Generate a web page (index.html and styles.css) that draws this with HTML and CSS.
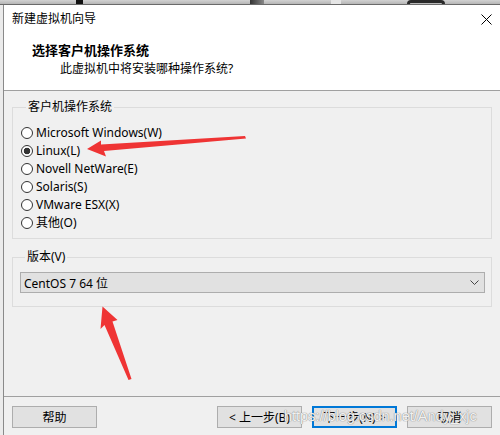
FILE: index.html
```html
<!DOCTYPE html>
<html lang="zh-CN">
<head>
<meta charset="utf-8">
<title>新建虚拟机向导</title>
<link rel="stylesheet" href="styles.css">
</head>
<body>
<div class="desk">
  <span class="d1"></span><span class="d2"></span><span class="d3"></span><span class="d4"></span>
</div>
<div class="win">
  <div class="header">
    <div class="titlerow">
      <span class="title">新建虚拟机向导</span>
      <svg class="close" width="11" height="11" viewBox="0 0 11 11"><path d="M0.5 0.5L10.5 10.5M10.5 0.5L0.5 10.5" stroke="#000" stroke-width="1" fill="none"/></svg>
    </div>
    <div class="heading">选择客户机操作系统</div>
    <div class="sub">此虚拟机中将安装哪种操作系统?</div>
  </div>
  <div class="content">
    <fieldset class="group os">
      <legend>客户机操作系统</legend>
      <div class="radio"><span class="circle"></span>Microsoft Windows(W)</div>
      <div class="radio"><span class="circle checked"></span>Linux(L)</div>
      <div class="radio"><span class="circle"></span>Novell NetWare(E)</div>
      <div class="radio"><span class="circle"></span>Solaris(S)</div>
      <div class="radio"><span class="circle"></span>VMware ESX(X)</div>
      <div class="radio"><span class="circle"></span>其他(O)</div>
    </fieldset>
    <fieldset class="group ver">
      <legend>版本(V)</legend>
      <div class="select">
        <span>CentOS 7 64 位</span>
        <svg class="chev" width="9" height="5" viewBox="0 0 9 5"><path d="M0.5 0.5L4.5 4.5L8.5 0.5" stroke="#444" stroke-width="1" fill="none"/></svg>
      </div>
    </fieldset>
  </div>
  <div class="footer">
    <div class="btn">帮助</div>
    <div class="spacer"></div>
    <div class="btn">&lt; 上一步(B)</div>
    <div class="btn primary">下一步(N) &gt;</div>
    <div class="btn">取消</div>
  </div>
</div>
<svg class="arrows" width="500" height="435" viewBox="0 0 500 435">
  <polygon points="87,149 101,140.5 101,144.5 245,136 246,138.5 104,151 106,156.5" fill="#ef3434"/>
  <polygon points="102.5,306.5 117.5,320 112.5,321.5 131.5,379 128.5,380 104.5,325 100.5,329" fill="#ef3434"/>
</svg>
<div class="watermark">https://blog.csdn.net/Andy_xjc</div>
</body>
</html>
```
FILE: styles.css
```css
* { box-sizing: border-box; }
html, body {
  margin: 0;
  padding: 0;
}
body {
  width: 500px;
  height: 435px;
  overflow: hidden;
  position: relative;
  background: #ebebeb;
  font-family: "Noto Sans", "Noto Sans CJK SC", sans-serif;
  font-size: 12px;
  color: #000;
}
.desk {
  height: 5px;
  border-bottom: 1px solid #6a6a6a;
  background: linear-gradient(#d2d2d2, #b6b6b6);
  display: flex;
}
.desk span { display: block; height: 4px; }
.d1 { margin-left: 76px; width: 7px; background: #111; }
.d2 { margin-left: 167px; width: 14px; background: linear-gradient(90deg, #333, #888); }
.d3 { margin-left: 67px; width: 10px; background: #e6e6e6; }
.d4 { margin-left: 66px; width: 38px; border: 3px solid #2a2a2a; border-bottom: 0; border-radius: 19px 19px 0 0; height: 4px; }

.win {
  margin-left: 3px;
  border-left: 1px solid #8a8a8a;
  height: 430px;
  display: flex;
  flex-direction: column;
}
.header {
  height: 86px;
  background: #fff;
  border-bottom: 1px solid #a0a0a0;
  padding: 6px 8px 0 8px;
}
.titlerow {
  display: flex;
  justify-content: space-between;
  align-items: center;
  height: 16px;
  line-height: 16px;
}
.title { font-size: 12px; }
.close { display: block; }
.heading {
  margin-top: 15px;
  padding-left: 20px;
  font-size: 13px;
  font-weight: bold;
  line-height: 16px;
}
.sub {
  margin-top: 3px;
  padding-left: 48px;
  line-height: 16px;
}
.content {
  flex: 1;
  background: #f0f0f0;
  padding: 0 8px;
}
.group {
  margin: 0;
  min-width: 0;
  border: 1px solid #dcdcdc;
}
.group legend {
  margin-left: 5px;
  padding: 0 2px;
  line-height: 16px;
  font-size: 12px;
}
.os {
  margin-top: 8px;
  padding: 9px 0 6px 8px;
}
.radio {
  display: flex;
  align-items: center;
  height: 18px;
  line-height: 18px;
}
.circle {
  width: 12px;
  height: 12px;
  border: 1px solid #333;
  border-radius: 50%;
  background: #fff;
  margin-right: 3px;
  flex: none;
}
.circle.checked {
  background: radial-gradient(circle, #333 0, #333 3px, #fff 3.6px);
}
.ver {
  margin-top: 10px;
  padding: 7px 6px 13px 7px;
}
.select {
  height: 21px;
  border: 1px solid #adadad;
  background: #e1e1e1;
  display: flex;
  align-items: center;
  justify-content: space-between;
  padding: 0 5px 0 3px;
}
.chev { display: block; }
.footer {
  height: 39px;
  border-top: 1px solid #a0a0a0;
  background: #f0f0f0;
  padding: 9px 8px 0 8px;
  display: flex;
  gap: 10px;
  align-items: flex-start;
}
.spacer { flex: 1; }
.btn {
  width: 85px;
  height: 22px;
  border: 1px solid #adadad;
  background: #e1e1e1;
  display: flex;
  align-items: center;
  justify-content: center;
  font-size: 12px;
}
.btn.primary {
  border: 2px solid #0078d7;
}
.arrows {
  position: absolute;
  left: 0;
  top: 0;
  pointer-events: none;
}
.watermark {
  position: absolute;
  left: 284px;
  top: 408px;
  font-family: "Liberation Sans", sans-serif;
  font-size: 14.5px;
  color: rgba(255, 255, 255, 0.9);
  text-shadow: 0 0 1px #8a8a8a, 0 0 1px #8a8a8a;
  pointer-events: none;
  white-space: nowrap;
}
```
